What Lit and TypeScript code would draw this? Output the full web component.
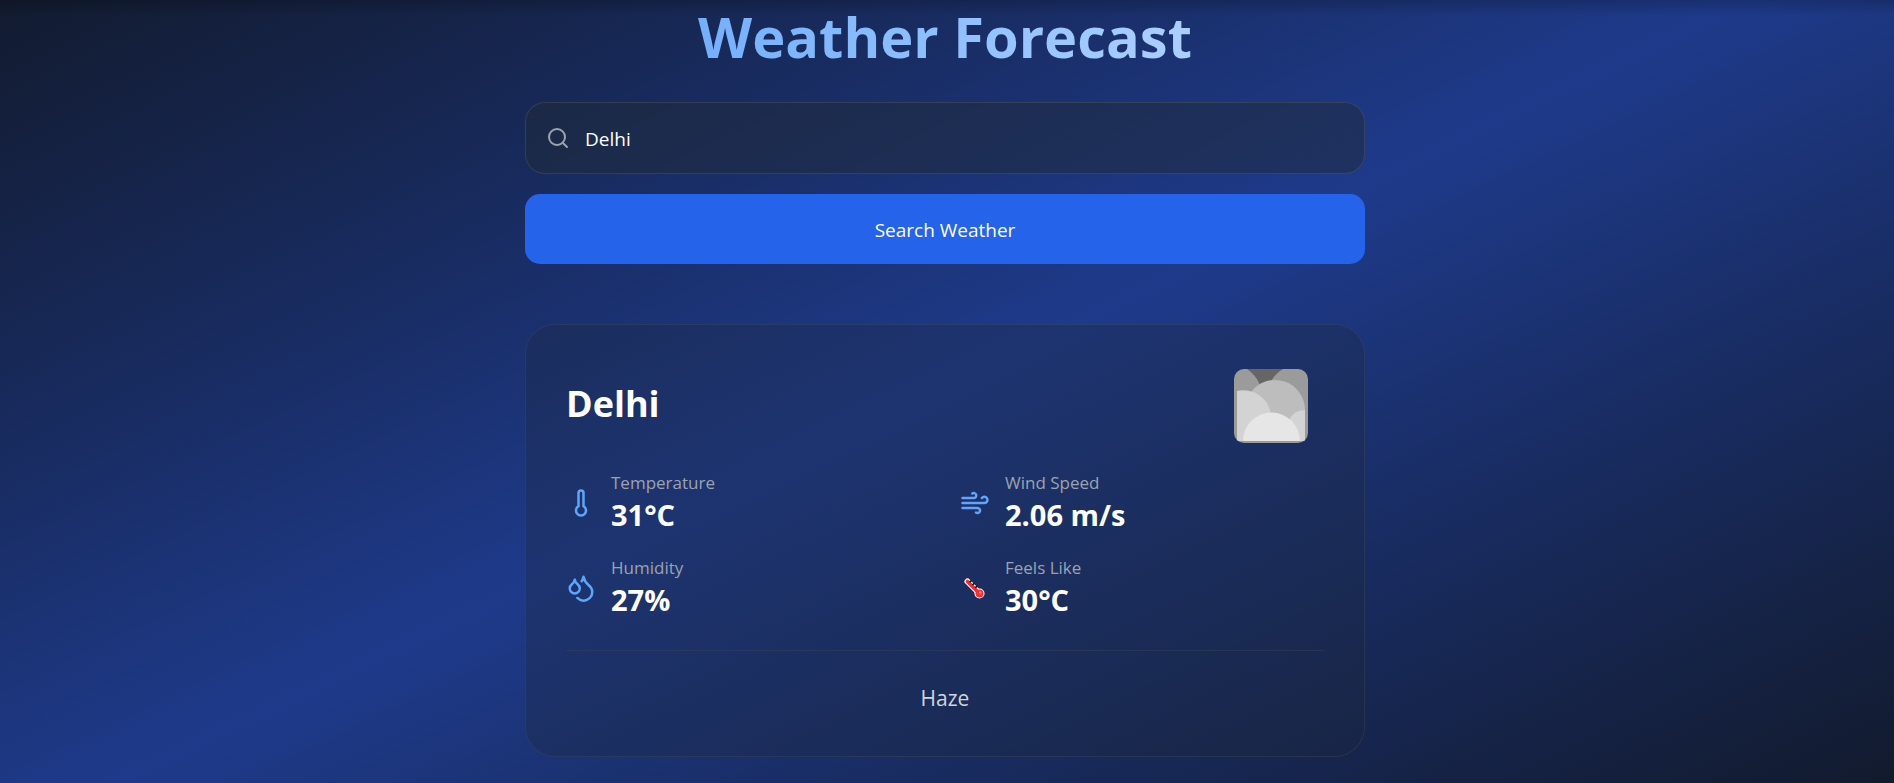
import { LitElement, html, css, svg } from "lit";
import { customElement, state } from "lit/decorators.js";

const thermometer = svg`<path d="M14 4v10.54a4 4 0 1 1-4 0V4a2 2 0 0 1 4 0Z"/>`;
const wind = svg`<path d="M12.8 19.6A2 2 0 1 0 14 16H2"/><path d="M17.5 8a2.5 2.5 0 1 1 2 4H2"/><path d="M9.8 4.4A2 2 0 1 1 11 8H2"/>`;
const droplets = svg`<path d="M7 16.3c2.2 0 4-1.83 4-4.05 0-1.16-.57-2.26-1.71-3.19S7.29 6.75 7 5.3c-.29 1.45-1.14 2.84-2.29 3.76S3 11.1 3 12.25c0 2.22 1.8 4.05 4 4.05z"/><path d="M12.56 6.6A10.97 10.97 0 0 0 14 3.02c.5 2.5 2 4.9 4 6.5s3 3.5 3 5.5a6.98 6.98 0 0 1-11.91 4.97"/>`;

const line = (shape: unknown) => html`<svg class="icon" viewBox="0 0 24 24" aria-hidden="true">${shape}</svg>`;

const feels = html`<svg class="feels" viewBox="0 0 30 30" aria-hidden="true">
  <path d="M7.500 8.500L19 20" stroke="#fff" stroke-width="6" stroke-linecap="round"/>
  <circle cx="19.500" cy="20.500" r="5" fill="#fff"/>
  <path d="M7.500 8.500L19 20" stroke="#ee2f2f" stroke-width="3.600" stroke-linecap="round"/>
  <circle cx="19.500" cy="20.500" r="4" fill="#f8312f"/>
  <circle cx="20.300" cy="19.500" r="1.300" fill="#ff8080"/>
  <path d="M9.600 9.200l1.800-1.600M12.400 12l1.800-1.600M15.200 14.800l1.800-1.600" stroke="#111" stroke-width="1.600"/>
</svg>`;

@customElement("app-root")
export class AppRoot extends LitElement {
  @state() private city = "Delhi";
  @state() private query = "Delhi";

  private readonly stats = [
    { label: "Temperature", value: "31°C", icon: line(thermometer) },
    { label: "Wind Speed", value: "2.06 m/s", icon: line(wind) },
    { label: "Humidity", value: "27%", icon: line(droplets) },
    { label: "Feels Like", value: "30°C", icon: feels },
  ];

  static styles = css`
    :host {
      display: block;
      box-sizing: border-box;
      min-height: 100vh;
      padding: 6px 24px 20px 20px;
      font-family: "Segoe UI", "Open Sans", "Noto Sans", sans-serif;
      color: #fff;
      background:
        linear-gradient(rgba(0, 0, 0, 0.18), transparent 16px),
        linear-gradient(to bottom right, #111827, #1e3a8a, #111827) 0 -70px / 100% calc(100% + 124px);
    }
    * { box-sizing: border-box; }
    .page { max-width: 840px; margin: 0 auto; }
    h1 {
      margin: 0 0 36px;
      font-size: 56px;
      line-height: 60px;
      font-weight: 700;
      text-align: center;
      color: transparent;
      background: linear-gradient(to right, #60a5fa, #bfdbfe);
      background-clip: text;
      -webkit-background-clip: text;
    }
    form { display: flex; flex-direction: column; gap: 20px; margin-bottom: 60px; }
    .field {
      display: flex;
      align-items: center;
      gap: 15px;
      height: 72px;
      padding: 0 20px;
      border: 1px solid rgba(75, 75, 75, 0.6);
      border-radius: 20px;
      background: rgba(31, 41, 55, 0.5);
      background-clip: padding-box;
    }
    .field svg {
      width: 24px;
      height: 24px;
      fill: none;
      stroke: #9ca3af;
      stroke-width: 2;
      stroke-linecap: round;
      stroke-linejoin: round;
    }
    input {
      flex: 1;
      min-width: 0;
      height: 100%;
      padding: 1px 0 0;
      border: 0;
      outline: 0;
      background: none;
      color: #fff;
      font: 500 19px/28px "Segoe UI", "Open Sans", "Noto Sans", sans-serif;
    }
    button {
      height: 70px;
      padding: 2px 0 0;
      border: 0;
      border-radius: 15px;
      background: #2563eb;
      color: #fff;
      font: 500 19px/28px "Segoe UI", "Open Sans", "Noto Sans", sans-serif;
      cursor: pointer;
    }
    .card {
      padding: 40px;
      border: 1px solid rgba(55, 65, 81, 0.5);
      border-radius: 30px;
      background: rgba(31, 41, 55, 0.3);
      background-clip: padding-box;
    }
    .head {
      display: flex;
      align-items: center;
      justify-content: space-between;
      height: 80px;
      margin-bottom: 25px;
      padding-right: 16px;
    }
    h2 { margin: 0; font-size: 36px; line-height: 50px; font-weight: 700; padding-bottom: 2px; }
    .haze { width: 74px; height: 74px; border-radius: 10px; margin-top: 2px; }
    dl { display: grid; grid-template-columns: 1fr 1fr; gap: 20px 30px; margin: 0 0 30px; }
    .stat { display: flex; align-items: center; gap: 15px; }
    .icon, .feels { width: 30px; height: 30px; flex: none; fill: none; }
    .icon {
      stroke: #60a5fa;
      stroke-width: 2;
      stroke-linecap: round;
      stroke-linejoin: round;
    }
    dt { font-size: 17px; line-height: 25px; color: #9ca3af; }
    dd { margin: 0; font-size: 29px; line-height: 40px; font-weight: 700; }
    .summary {
      margin: 0;
      padding-top: 30px;
      border-top: 1px solid rgba(55, 65, 81, 0.5);
      font-size: 21px;
      line-height: 35px;
      text-align: center;
      color: #d1d5db;
    }
  `;

  private search(e: Event) {
    e.preventDefault();
    this.city = this.query.trim() || this.city;
  }

  render() {
    return html`<main class="page">
      <h1>Weather Forecast</h1>
      <form @submit=${this.search}>
        <label class="field">
          <svg viewBox="0 0 24 24" aria-hidden="true"><circle cx="11" cy="11" r="8"/><path d="m21 21-4.300-4.300"/></svg>
          <input type="text" aria-label="City" .value=${this.query}
            @input=${(e: Event) => (this.query = (e.target as HTMLInputElement).value)} />
        </label>
        <button type="submit">Search Weather</button>
      </form>
      <section class="card">
        <div class="head">
          <h2>${this.city}</h2>
          <svg class="haze" viewBox="0 0 74 74" role="img" aria-label="Haze">
            <rect width="74" height="74" fill="#9b9b9b"/>
            <path d="M13 0H49Q42 4 37 12L26 16Q22 6 13 0Z" fill="#666"/>
            <path d="M17 23A30 30 0 0 1 71 41V72H17Z" fill="#bdbdbd"/>
            <path d="M3 72V22A28 28 0 0 1 37 45V72Z" fill="#d3d3d3"/>
            <path d="M71 41A18 18 0 0 0 55 51L60 72H71Z" fill="#d3d3d3"/>
            <path d="M9 72A28.500 28.500 0 0 1 66 72Z" fill="#e6e6e6"/>
          </svg>
        </div>
        <dl>
          ${this.stats.map((s) => html`<div class="stat">
            ${s.icon}
            <div><dt>${s.label}</dt><dd>${s.value}</dd></div>
          </div>`)}
        </dl>
        <p class="summary">Haze</p>
      </section>
    </main>`;
  }
}
